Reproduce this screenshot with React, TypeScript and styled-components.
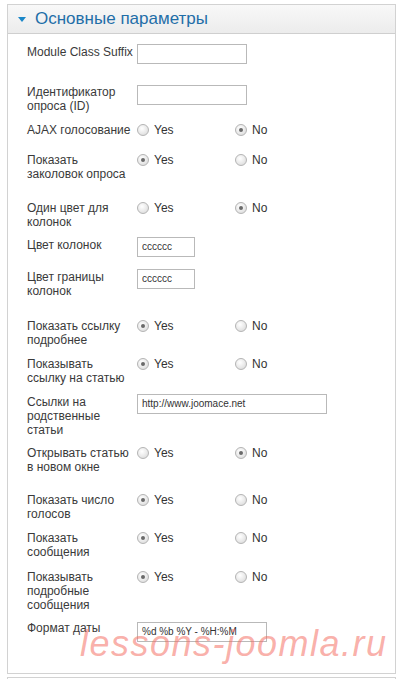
import styled, { createGlobalStyle } from 'styled-components';

const GlobalStyle = createGlobalStyle`
  html, body {
    margin: 0;
    padding: 0;
    background: #ffffff;
    font-family: "Liberation Sans", Arial, sans-serif;
  }
`;

type Choice = 'yes' | 'no';

interface Param {
  label: string[];
  kind: 'text' | 'radio';
  value?: string;
  width?: number;
  checked?: Choice;
  h: number;       // distance to the next row
  offset?: number; // input shift against the label
}

const params: Param[] = [
  { label: ['Module Class Suffix'], kind: 'text', value: '', width: 110, h: 40, offset: -1 },
  { label: ['Идентификатор', 'опроса (ID)'], kind: 'text', value: '', width: 110, h: 38, offset: 0 },
  { label: ['AJAX голосование'], kind: 'radio', checked: 'no', h: 30 },
  { label: ['Показать', 'заколовок опроса'], kind: 'radio', checked: 'yes', h: 48 },
  { label: ['Один цвет для', 'колонок'], kind: 'radio', checked: 'no', h: 37 },
  { label: ['Цвет колонок'], kind: 'text', value: 'cccccc', width: 58, h: 32, offset: -1 },
  { label: ['Цвет границы', 'колонок'], kind: 'text', value: 'cccccc', width: 58, h: 49, offset: -1 },
  { label: ['Показать ссылку', 'подробнее'], kind: 'radio', checked: 'yes', h: 38 },
  { label: ['Показывать', 'ссылку на статью'], kind: 'radio', checked: 'yes', h: 38 },
  { label: ['Ссылки на', 'родственные', 'статьи'], kind: 'text', value: 'http://www.joomace.net', width: 190, h: 51, offset: -1 },
  { label: ['Открывать статью', 'в новом окне'], kind: 'radio', checked: 'no', h: 47 },
  { label: ['Показать число', 'голосов'], kind: 'radio', checked: 'yes', h: 38 },
  { label: ['Показать', 'сообщения'], kind: 'radio', checked: 'yes', h: 39 },
  { label: ['Показывать', 'подробные', 'сообщения'], kind: 'radio', checked: 'yes', h: 51 },
  { label: ['Формат даты'], kind: 'text', value: '%d %b %Y - %H:%M', width: 130, h: 21, offset: 1 },
];

function App() {
  return (
    <>
      <GlobalStyle />
      <Panel>
        <PanelHeader>
          <Arrow />
          <Title>Основные параметры</Title>
        </PanelHeader>
        <PanelBody>
          {params.map((p, i) => (
            <Row key={i} $h={p.h}>
              <Label>
                {p.label.map((line, j) => (
                  <span key={j}>{line}</span>
                ))}
              </Label>
              {p.kind === 'text' ? (
                <TextField $w={p.width ?? 110} $offset={p.offset ?? 0}>
                  {p.value}
                </TextField>
              ) : (
                <RadioGroup>
                  <RadioOption>
                    <Radio $checked={p.checked === 'yes'} />
                    Yes
                  </RadioOption>
                  <RadioOption>
                    <Radio $checked={p.checked === 'no'} />
                    No
                  </RadioOption>
                </RadioGroup>
              )}
            </Row>
          ))}
        </PanelBody>
        <Watermark>lessons-joomla.ru</Watermark>
      </Panel>
      <NextPanel />
    </>
  );
}

const Panel = styled.div`
  position: relative;
  margin: 4px 0 0 7px;
  width: 389px;
  box-sizing: border-box;
  border: 1px solid #d2d2d2;
  background: #ffffff;
`;

const PanelHeader = styled.div`
  display: flex;
  align-items: center;
  height: 28px;
  padding-left: 10px;
  border-bottom: 1px solid #cfcfcf;
  background: linear-gradient(to bottom, #f8f8f8 0%, #ececec 100%);
`;

const Arrow = styled.span`
  width: 0;
  height: 0;
  margin-right: 9px;
  margin-top: 1px;
  border-left: 4px solid transparent;
  border-right: 4px solid transparent;
  border-top: 5px solid #1b87c8;
`;

const Title = styled.span`
  font-size: 17px;
  color: #1f6ea8;
`;

const PanelBody = styled.div`
  display: flex;
  flex-direction: column;
  padding: 11px 0 31px 19px;
`;

const Row = styled.div<{ $h: number }>`
  display: flex;
  align-items: flex-start;
  height: ${(p) => p.$h}px;
`;

const Label = styled.div`
  display: flex;
  flex-direction: column;
  width: 110px;
  flex-shrink: 0;
  font-size: 12px;
  line-height: 14px;
  color: #3a3a3a;
  white-space: nowrap;
`;

const TextField = styled.div<{ $w: number; $offset: number }>`
  width: ${(p) => p.$w}px;
  height: 20px;
  margin-top: ${(p) => p.$offset}px;
  box-sizing: border-box;
  border: 1px solid #b9b9b9;
  background: #ffffff;
  padding: 0 4px;
  font-size: 10px;
  line-height: 18px;
  color: #333333;
  white-space: nowrap;
  overflow: hidden;
`;

const RadioGroup = styled.div`
  display: flex;
  align-items: center;
  height: 14px;
`;

const RadioOption = styled.div`
  display: flex;
  align-items: center;
  width: 98px;
  font-size: 12px;
  color: #333333;
`;

const Radio = styled.span<{ $checked: boolean }>`
  position: relative;
  width: 12px;
  height: 12px;
  margin-right: 5px;
  box-sizing: border-box;
  border-radius: 50%;
  border: 1px solid #b4b4b4;
  background: radial-gradient(circle at 40% 35%, #ffffff 0%, #e9e9e9 55%, #d4d4d4 100%);

  &::after {
    content: '';
    display: ${(p) => (p.$checked ? 'block' : 'none')};
    position: absolute;
    left: 3px;
    top: 3px;
    width: 4px;
    height: 4px;
    border-radius: 50%;
    background: #6a6a6a;
  }
`;

const Watermark = styled.div`
  position: absolute;
  left: 72px;
  top: 621px;
  font-size: 36px;
  line-height: 36px;
  font-style: italic;
  letter-spacing: 1.5px;
  color: rgba(244, 110, 98, 0.55);
  white-space: nowrap;
  pointer-events: none;
`;

const NextPanel = styled.div`
  margin: 3px 0 0 7px;
  width: 389px;
  height: 12px;
  box-sizing: border-box;
  border: 1px solid #d2d2d2;
  border-bottom: none;
`;

export default App;
